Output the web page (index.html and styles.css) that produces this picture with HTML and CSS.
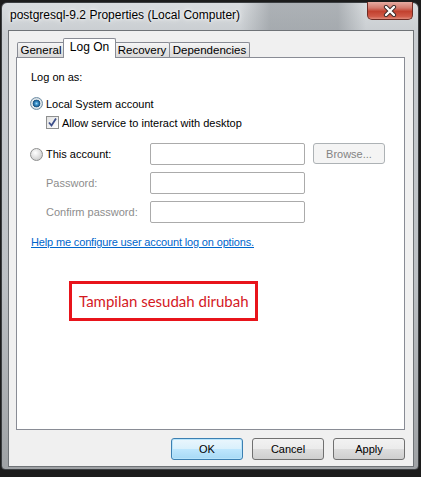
FILE: index.html
```html
<!DOCTYPE html>
<html lang="en">
<head>
    <meta charset="UTF-8">
    <title>postgresql-9.2 Properties (Local Computer)</title>
    <link rel="stylesheet" href="styles.css">
</head>
<body>
<!-- Win7 style service properties dialog -->
<div class="window">
    <div class="titlebar">
        <span class="title">postgresql-9.2 Properties (Local Computer)</span>
        <span class="close">
            <svg width="18" height="12" viewBox="0 0 18 12">
                <path d="M5 2 L13 10 M13 2 L5 10" stroke="#3b2a2a" stroke-width="4.2" stroke-linecap="round" fill="none"/>
                <path d="M5 2 L13 10 M13 2 L5 10" stroke="#ffffff" stroke-width="2.4" stroke-linecap="round" fill="none"/>
            </svg>
        </span>
    </div>

    <div class="client">
        <div class="tabs">
            <div class="tab tab-general">General</div>
            <div class="tab tab-active">Log On</div>
            <div class="tab tab-recovery">Recovery</div>
            <div class="tab tab-deps">Dependencies</div>
        </div>

        <div class="panel">
            <p class="group-label">Log on as:</p>
            <div class="option">
                <span class="radio radio-on"></span>
                <span>Local System account</span>
            </div>
            <div class="option option-sub">
                <span class="check">
                    <svg width="11" height="11" viewBox="0 0 11 11">
                        <path d="M2 5.5 L4.5 8.5 L9 1.5" stroke="#3d4f8a" stroke-width="1.8" fill="none"/>
                    </svg>
                </span>
                <span>Allow service to interact with desktop</span>
            </div>

            <div class="account">
                <div class="option">
                    <span class="radio"></span>
                    <span>This account:</span>
                </div>
                <span class="field"></span>
                <span class="btn btn-disabled">Browse...</span>

                <span class="field-label">Password:</span>
                <span class="field"></span>
                <span></span>

                <span class="field-label">Confirm password:</span>
                <span class="field"></span>
            </div>

            <a class="help" href="#">Help me configure user account log on options.</a>

            <div class="note">Tampilan sesudah dirubah</div>
        </div>

        <div class="actions">
            <span class="btn btn-default">OK</span>
            <span class="btn">Cancel</span>
            <span class="btn">Apply</span>
        </div>
    </div>
</div>
</body>
</html>
```

FILE: styles.css
```css
body {
    margin: 0;
    background: #1c1c1c;
    font-family: "Liberation Sans", Arial, sans-serif;
    font-size: 11px;
    color: #000;
}

/* outer frame */
.window {
    width: 418px;
    height: 468px;
    box-sizing: border-box;
    margin: 2px 0 0 1px;
    border: 1px solid #3c3f42;
    border-radius: 6px 6px 4px 4px;
    padding: 0 4px 2px 6px;
    background: linear-gradient(#d9dcdf, #c9cdd1 30px, #bcc0c4 60%, #9fa2a5);
    display: flex;
    flex-direction: column;
}

.titlebar {
    height: 27px;
    flex: none;
    display: flex;
    align-items: flex-start;
    padding-left: 2px;
    background: linear-gradient(to right, transparent 232px, rgba(120, 126, 132, .45) 262px, rgba(120, 126, 132, .45) 330px, transparent 358px);
}
.title {
    font-size: 12px;
    line-height: 15px;
    padding-top: 5px;
    text-shadow: 0 0 6px #fff, 0 0 3px #fff;
}
.close {
    margin-left: auto;
    margin-right: 1px;
    margin-top: -1px;
    width: 46px;
    height: 18px;
    box-sizing: border-box;
    border: 1px solid #6e2b24;
    border-top: none;
    border-radius: 0 0 5px 5px;
    background: linear-gradient(#e7aca2, #d47a6d 35%, #c2412f 55%, #d05a48 85%, #e08b7b);
    display: flex;
    align-items: center;
    justify-content: center;
}

/* dialog body */
.client {
    flex: 1;
    background: #f0f0f0;
    border: 1px solid #6f7377;
    padding: 7px 8px 0 7px;
    display: flex;
    flex-direction: column;
}

.tabs {
    display: flex;
    align-items: flex-end;
    height: 19px;
    margin-left: 1px;
}
.tab {
    height: 15px;
    box-sizing: border-box;
    border: 1px solid #898c95;
    border-bottom: none;
    border-radius: 2px 2px 0 0;
    background: linear-gradient(#f6f6f6, #e6e6e6 50%, #dadada);
    line-height: 14px;
    text-align: center;
    font-size: 11.5px;
}
.tab-general { width: 48px; }
.tab-active {
    width: 53px;
    height: 20px;
    margin: 0 -2px -1px -2px;
    background: #fff;
    position: relative;
    z-index: 1;
    font-size: 12px;
    line-height: 17px;
}
.tab-recovery { width: 56px; }
.tab-deps { width: 81px; margin-left: -1px; }

.panel {
    height: 373px;
    box-sizing: border-box;
    background: #fff;
    border: 1px solid #898c95;
    padding: 12px 0 0 13px;
}

.group-label {
    margin: 0 0 0 1px;
    line-height: 14px;
}

.option {
    display: flex;
    align-items: center;
    gap: 3px;
    height: 13px;
    margin-top: 13px;
}
.option-sub {
    margin-top: 6px;
    margin-left: 16px;
}

.radio {
    width: 13px;
    height: 13px;
    box-sizing: border-box;
    border-radius: 50%;
    border: 1px solid #8e8f8f;
    background: radial-gradient(circle at 40% 35%, #ffffff, #e3e3e3 45%, #bfbfbf);
    flex: none;
}
.radio-on {
    border-color: #6f8ea6;
    background: radial-gradient(circle closest-side at 50% 50%, #9fd8f5 0, #3d95cf 1.5px, #1d5f93 3px, #2a5d86 3.6px, #e8eef2 4.2px, #cfd6db);
}
.check {
    width: 13px;
    height: 13px;
    box-sizing: border-box;
    border: 1px solid #8e8f8f;
    background: linear-gradient(135deg, #e0e0e0, #ffffff);
    display: flex;
    align-items: center;
    justify-content: center;
    flex: none;
}

.account {
    display: grid;
    grid-template-columns: 112px 155px 72px;
    grid-auto-rows: 22px;
    column-gap: 8px;
    row-gap: 7px;
    margin-top: 14px;
}
.account .option {
    margin-top: 0;
    align-self: center;
}
.field {
    border: 1px solid #ababab;
    border-radius: 2px;
    background: #fff;
}
.field-label {
    padding-left: 16px;
    color: #8d8d8d;
    align-self: center;
}

.btn {
    height: 22px;
    box-sizing: border-box;
    border: 1px solid #707070;
    border-radius: 3px;
    background: linear-gradient(#f2f2f2, #ebebeb 50%, #dddddd 51%, #cfcfcf);
    display: flex;
    align-items: center;
    justify-content: center;
    width: 72px;
}
.btn-disabled {
    height: 21px;
    border-color: #adb2b5;
    background: #f4f4f4;
    color: #838383;
}
.btn-default {
    border-color: #3c7fb1;
    background: linear-gradient(#eaf6fd, #d9f0fc 50%, #bee6fd 51%, #a7d9f5);
    box-shadow: inset 0 0 0 1px #b8e4fb;
}

.help {
    display: block;
    margin-top: 12px;
    margin-left: 1px;
    line-height: 14px;
    color: #0066cc;
    text-decoration: underline;
    letter-spacing: -0.15px;
}

.note {
    margin: 32px 0 0 39px;
    width: 189px;
    height: 40px;
    box-sizing: border-box;
    border: 3px solid #e8141b;
    padding-left: 7px;
    display: flex;
    align-items: center;
    font-family: Lato, "Liberation Sans", sans-serif;
    font-size: 15px;
    color: #d4191f;
}

.actions {
    display: flex;
    justify-content: flex-end;
    gap: 9px;
    margin-top: 8px;
}
```
